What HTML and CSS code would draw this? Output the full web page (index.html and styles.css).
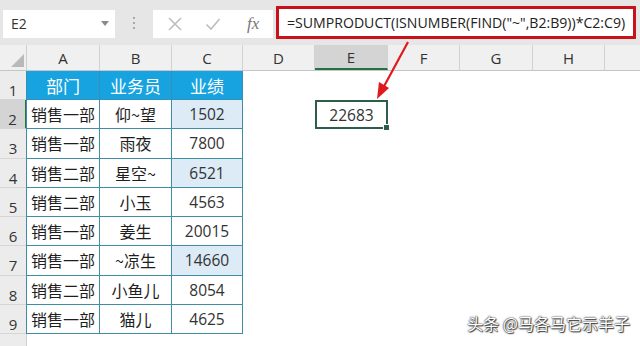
FILE: index.html
```html
<!DOCTYPE html>
<html>
  <head>
    <title>SUMPRODUCT</title>
    <link rel="stylesheet" href="styles.css">
  </head>
  <body>
    <div class="toolbar">
      <div class="namebox">
        <span>E2</span>
        <svg class="drop" width="8" height="5" viewBox="0 0 8 5"><path d="M0 0h8L4 5z" fill="#8a8a8a"/></svg>
      </div>
      <div class="grip"><i></i><i></i><i></i></div>
      <div class="buttons">
        <svg width="16" height="16" viewBox="0 0 16 16"><path d="M2 2L14 14M14 2L2 14" stroke="#bdbdbd" stroke-width="1.6"/></svg>
        <svg width="16" height="16" viewBox="0 0 16 16"><path d="M1.5 8.5L6 13L14.5 3" stroke="#bdbdbd" stroke-width="1.6" fill="none"/></svg>
        <span class="fx">fx</span>
      </div>
      <div class="formula">=SUMPRODUCT(ISNUMBER(FIND("~",B2:B9))*C2:C9)</div>
    </div>

    <div class="sheet">
      <div class="row colhead">
        <div class="rh corner"><svg width="13" height="13" viewBox="0 0 13 13"><path d="M13 0V13H0z" fill="#b9b9b9"/></svg></div>
        <div class="ch">A</div><div class="ch">B</div><div class="ch">C</div><div class="ch">D</div>
        <div class="ch sel">E</div><div class="ch">F</div><div class="ch">G</div><div class="ch">H</div>
        <div class="ch last"></div>
      </div>
      <div class="row first">
        <div class="rh">1</div>
        <div class="c hd left">部门</div><div class="c hd">业务员</div><div class="c hd">业绩</div>
      </div>
      <div class="row">
        <div class="rh sel">2</div>
        <div class="c left">销售一部</div><div class="c">仰~望</div><div class="c num hl">1502</div>
        <div class="gap"></div><div class="active">22683<i></i></div>
      </div>
      <div class="row">
        <div class="rh">3</div>
        <div class="c left">销售一部</div><div class="c">雨夜</div><div class="c num">7800</div>
      </div>
      <div class="row">
        <div class="rh">4</div>
        <div class="c left">销售二部</div><div class="c">星空~</div><div class="c num hl">6521</div>
      </div>
      <div class="row">
        <div class="rh">5</div>
        <div class="c left">销售二部</div><div class="c">小玉</div><div class="c num">4563</div>
      </div>
      <div class="row">
        <div class="rh">6</div>
        <div class="c left">销售一部</div><div class="c">姜生</div><div class="c num">20015</div>
      </div>
      <div class="row">
        <div class="rh">7</div>
        <div class="c left">销售一部</div><div class="c">~凉生</div><div class="c num hl">14660</div>
      </div>
      <div class="row">
        <div class="rh">8</div>
        <div class="c left">销售二部</div><div class="c">小鱼儿</div><div class="c num">8054</div>
      </div>
      <div class="row">
        <div class="rh">9</div>
        <div class="c left">销售一部</div><div class="c">猫儿</div><div class="c num">4625</div>
      </div>
      <div class="row rest">
        <div class="rh"></div>
      </div>
    </div>

    <svg class="arrow" width="640" height="346" viewBox="0 0 640 346">
      <path d="M408 42L382 90" stroke="#e0191e" stroke-width="2.2"/>
      <path d="M377 99L379 82L389 88z" fill="#e0191e"/>
    </svg>

    <div class="mark">头条 @马各马它示羊子</div>
  </body>
</html>
```

FILE: styles.css
```css
body{
    margin: 0;
    width: 640px;
    height: 346px;
    overflow: hidden;
    background: #fff;
    font-family: "Noto Sans CJK SC", "Noto Sans", sans-serif;
    color: #222;
    position: relative;
}
.toolbar{
    height: 45px;
    background: #e6e6e6;
    display: flex;
    align-items: center;
    box-sizing: border-box;
    padding: 0 4px 0 3px;
}
.namebox{
    width: 112px;
    height: 28px;
    background: #fff;
    box-sizing: border-box;
    display: flex;
    align-items: center;
    justify-content: space-between;
    padding: 0 6px 0 8px;
    font-family: "Open Sans", sans-serif;
    font-size: 14px;
    color: #333;
    margin-top: 2px;
}
.grip{
    width: 38px;
    display: flex;
    flex-direction: column;
    align-items: center;
    gap: 3px;
}
.grip i{
    width: 2px;
    height: 2px;
    background: #a8a8a8;
}
.buttons{
    width: 120px;
    height: 28px;
    background: #fff;
    display: flex;
    align-items: center;
    gap: 22px;
    padding-left: 14px;
    box-sizing: border-box;
    margin-top: 2px;
}
.fx{
    font-family: "Liberation Serif", serif;
    font-style: italic;
    font-size: 17px;
    color: #777;
    margin-left: 4px;
}
.formula{
    flex: 1;
    margin-left: 3px;
    height: 33px;
    border: 3px solid #c8121b;
    box-sizing: border-box;
    background: #fff;
    display: flex;
    align-items: center;
    padding-left: 8px;
    font-family: "Open Sans", sans-serif;
    font-size: 14.1px;
    color: #222;
    white-space: nowrap;
    overflow: hidden;
}
.sheet{
    display: flex;
    flex-direction: column;
}
.row{
    display: flex;
    height: 29.25px;
}
.row.first{
    height: 29px;
}
.row.rest{
    height: 20px;
}
.row > div{
    box-sizing: border-box;
    height: 100%;
    flex: none;
}
.rh{
    width: 27px;
    background: #ececec;
    border-right: 1px solid #cfcfcf;
    border-bottom: 1px solid #d6d6d6;
    display: flex;
    align-items: center;
    justify-content: center;
    padding-top: 10px;
    font-family: "Open Sans", sans-serif;
    font-size: 15px;
    color: #333;
}
.rh.sel{
    background: #d4d4d4;
    border-right: 2px solid #217346;
}
.colhead{
    height: 26px;
    background: #f0f0f0;
    border-bottom: 1px solid #c6c6c6;
    box-sizing: border-box;
}
.corner{
    background: #f0f0f0;
    border-bottom: none;
    align-items: flex-end;
    justify-content: flex-end;
    padding: 0 2px 3px 0;
}
.ch{
    width: 72px;
    border-right: 1px solid #d2d2d2;
    display: flex;
    align-items: center;
    justify-content: center;
    font-family: "Open Sans", sans-serif;
    font-size: 15px;
    color: #333;
}
.ch:nth-child(2), .ch:nth-child(6), .ch:nth-child(8){
    width: 73px;
}
.ch:nth-child(4){
    width: 71px;
}
.ch.sel{
    background: #d4d4d4;
    border-bottom: 2px solid #217346;
}
.ch.last{
    flex: 1;
    border-right: none;
}
.c{
    width: 72px;
    border-right: 1px solid #3f8ea6;
    border-bottom: 1px solid #3f8ea6;
    display: flex;
    align-items: center;
    justify-content: center;
    font-size: 16px;
    color: #1e1e1e;
}
.c.left{
    border-left: 1px solid #3f8ea6;
    margin-left: -1px;
    width: 74px;
}
.c:nth-child(4){
    width: 71px;
}
.c.num{
    font-family: "Open Sans", sans-serif;
    font-size: 15.5px;
    color: #333;
}
.c.hl{
    background: #dcebf6;
}
.c.hd{
    background: #16a3e0;
    color: #fff;
    border-color: #3a8fb6;
    font-size: 17px;
}
.gap{
    width: 72px;
}
.active{
    width: 73px;
    border: 2px solid #2e5e4a;
    display: flex;
    align-items: center;
    justify-content: center;
    font-family: "Open Sans", sans-serif;
    font-size: 15.5px;
    color: #333;
    position: relative;
}
.active i{
    position: absolute;
    right: -4px;
    bottom: -4px;
    width: 5px;
    height: 5px;
    background: #2e5e4a;
    border: 1px solid #fff;
}
.arrow{
    position: absolute;
    left: 0;
    top: 0;
}
.mark{
    position: absolute;
    right: 10px;
    bottom: 11px;
    font-size: 16px;
    color: #fff;
    text-shadow: 0 0 2px #333, 0 0 1px #333, 1px 1px 1px #444;
}
```
